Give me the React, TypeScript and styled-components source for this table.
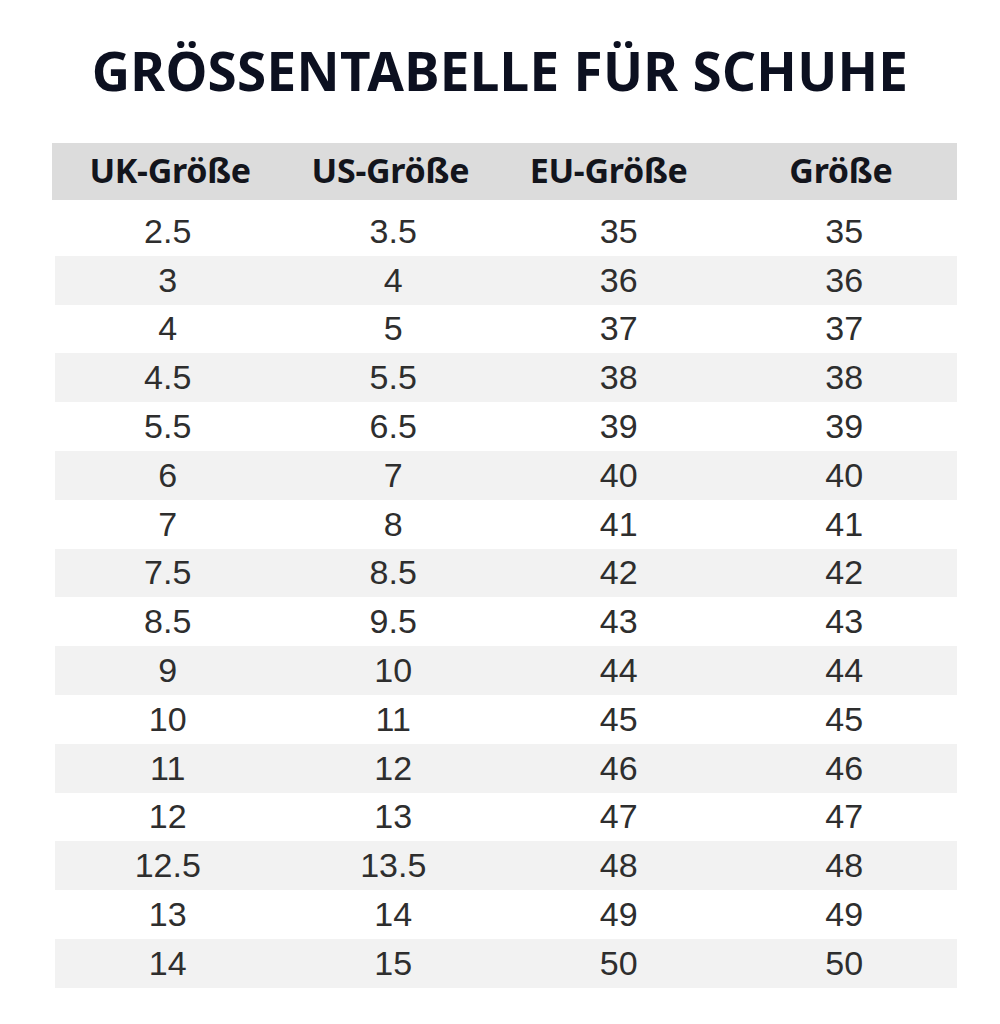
import React from "react";
import styled, { createGlobalStyle } from "styled-components";

const GlobalStyle = createGlobalStyle`
  html, body {
    margin: 0;
    padding: 0;
    background: #ffffff;
  }
`;

const Page = styled.div`
  width: 1000px;
  height: 1024px;
  display: flex;
  flex-direction: column;
  align-items: center;
  background: #ffffff;
`;

const Title = styled.h1`
  margin: 36px 0 0;
  height: 70px;
  line-height: 70px;
  font-family: "Noto Sans", "Open Sans", sans-serif;
  font-weight: 700;
  font-size: 53px;
  letter-spacing: 0.3px;
  color: #0c1020;
`;

const Table = styled.div`
  margin-top: 37px;
  align-self: flex-start;
  margin-left: 52px;
  width: 905px;
  display: flex;
  flex-direction: column;
`;

const HeaderRow = styled.div`
  height: 57px;
  display: grid;
  grid-template-columns: repeat(4, 1fr);
  align-items: center;
  background: #dcdcdc;
`;

// $shift nudges the centred label left or right inside its column
const HeaderCell = styled.div<{ $shift: number }>`
  text-align: center;
  font-family: "Noto Sans", "Open Sans", sans-serif;
  font-weight: 700;
  font-size: 34px;
  letter-spacing: -0.3px;
  color: #13151c;
  padding-bottom: 4px;
  padding-left: ${(p) => Math.max(p.$shift, 0) * 2}px;
  padding-right: ${(p) => Math.max(-p.$shift, 0) * 2}px;
`;

const Body = styled.div`
  margin-top: 7px;
  padding-left: 3px;
  display: flex;
  flex-direction: column;
`;

const Row = styled.div<{ $striped: boolean }>`
  height: 48.8px;
  display: grid;
  grid-template-columns: repeat(4, 1fr);
  align-items: center;
  background: ${(p) => (p.$striped ? "#f2f2f2" : "#ffffff")};
`;

const Cell = styled.div`
  text-align: center;
  font-family: "Liberation Sans", Arial, sans-serif;
  font-size: 34px;
  color: #2e2e2e;
`;

const headers: [string, number][] = [
  ["UK-Größe", 5],
  ["US-Größe", -1],
  ["EU-Größe", -9],
  ["Größe", -3],
];

const rows: string[][] = [
  ["2.5", "3.5", "35", "35"],
  ["3", "4", "36", "36"],
  ["4", "5", "37", "37"],
  ["4.5", "5.5", "38", "38"],
  ["5.5", "6.5", "39", "39"],
  ["6", "7", "40", "40"],
  ["7", "8", "41", "41"],
  ["7.5", "8.5", "42", "42"],
  ["8.5", "9.5", "43", "43"],
  ["9", "10", "44", "44"],
  ["10", "11", "45", "45"],
  ["11", "12", "46", "46"],
  ["12", "13", "47", "47"],
  ["12.5", "13.5", "48", "48"],
  ["13", "14", "49", "49"],
  ["14", "15", "50", "50"],
];

export default function App() {
  return (
    <Page>
      <GlobalStyle />
      <Title>GRÖSSENTABELLE FÜR SCHUHE</Title>
      <Table>
        <HeaderRow>
          {headers.map(([label, shift]) => (
            <HeaderCell key={label} $shift={shift}>
              {label}
            </HeaderCell>
          ))}
        </HeaderRow>
        <Body>
          {rows.map((r, i) => (
            <Row key={i} $striped={i % 2 === 1}>
              {r.map((v, j) => (
                <Cell key={j}>{v}</Cell>
              ))}
            </Row>
          ))}
        </Body>
      </Table>
    </Page>
  );
}
